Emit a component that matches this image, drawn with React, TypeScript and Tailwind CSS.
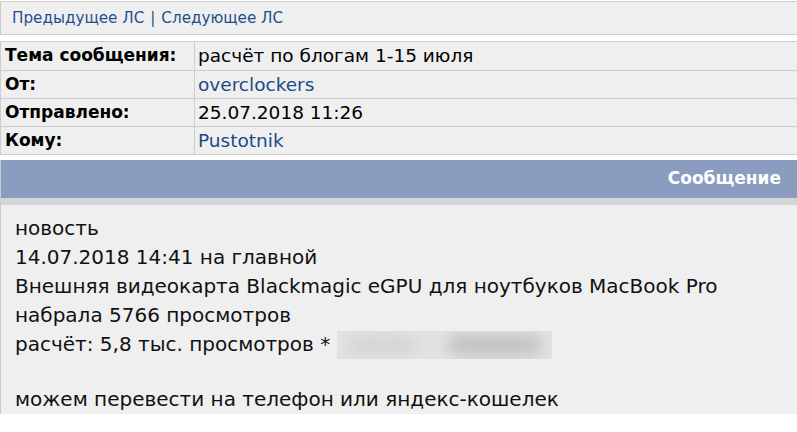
export default function App() {
  const font = { fontFamily: "Verdana, 'DejaVu Sans', sans-serif" };
  const rows: Array<{ label: string; value: string; link?: boolean }> = [
    { label: "Тема сообщения:", value: "расчёт по блогам 1-15 июля" },
    { label: "От:", value: "overclockers", link: true },
    { label: "Отправлено:", value: "25.07.2018 11:26" },
    { label: "Кому:", value: "Pustotnik", link: true },
  ];

  return (
    <div className="w-[797px] h-[432px] overflow-hidden bg-white pt-px font-['DejaVu_Sans',sans-serif]" style={font}>
      {/* Nav between PMs */}
      <div className="h-[34px] bg-[#efefef] border border-r-0 border-[#cdcdcd] flex items-center pl-[11px] text-[15.2px] text-[#1f4f8f]">
        <span>Предыдущее ЛС</span>
        <span className="mx-[6px]">|</span>
        <span>Следующее ЛС</span>
      </div>

      {/* Header table */}
      <div className="mt-[6px] border border-r-0 border-[#cdcdcd] bg-[#efefef]">
        {rows.map((r, i) => (
          <div
            key={r.label}
            className={`grid grid-cols-[194px_1fr] h-[28px] ${i > 0 ? "border-t border-[#cdcdcd]" : ""}`}
          >
            <div className="flex items-center pl-[4px] font-bold text-[17px] text-black border-r border-[#cdcdcd]">
              {r.label}
            </div>
            <div
              className={`flex items-center pl-[3px] text-[18.5px] ${r.link ? "text-[#1a4a8a]" : "text-black"}`}
            >
              {r.value}
            </div>
          </div>
        ))}
      </div>

      {/* Message */}
      <div className="mt-[5px] border-l border-[#cdcdcd] bg-[#efefef]">
        <div className="h-[38px] bg-[#8a9cc0] flex items-center justify-end pr-[16px] text-white font-bold text-[17px]">
          Сообщение
        </div>
        <div className="h-[7px] bg-[#d3d7da]" />
        <div className="pl-[14px] pt-[9px] text-[20px] leading-[29px] text-[#111]">
          <div>новость</div>
          <div>14.07.2018 14:41 на главной</div>
          <div>Внешняя видеокарта Blackmagic eGPU для ноутбуков MacBook Pro</div>
          <div>набрала 5766 просмотров</div>
          <div className="flex items-center">
            <span>расчёт: 5,8 тыс. просмотров *</span>
            {/* blurred-out contact */}
            <span className="ml-[7px] relative inline-block w-[215px] h-[28px] bg-[#e3e3e3] overflow-hidden">
              <span className="absolute left-[10px] top-[6px] w-[70px] h-[16px] rounded-full bg-[#d2d2d2] blur-sm" />
              <span className="absolute left-[110px] top-[5px] w-[95px] h-[18px] rounded-full bg-[#bdbdbd] blur-sm" />
            </span>
          </div>
          <div className="h-[26px]" />
          <div>можем перевести на телефон или яндекс-кошелек</div>
        </div>
      </div>
    </div>
  );
}
